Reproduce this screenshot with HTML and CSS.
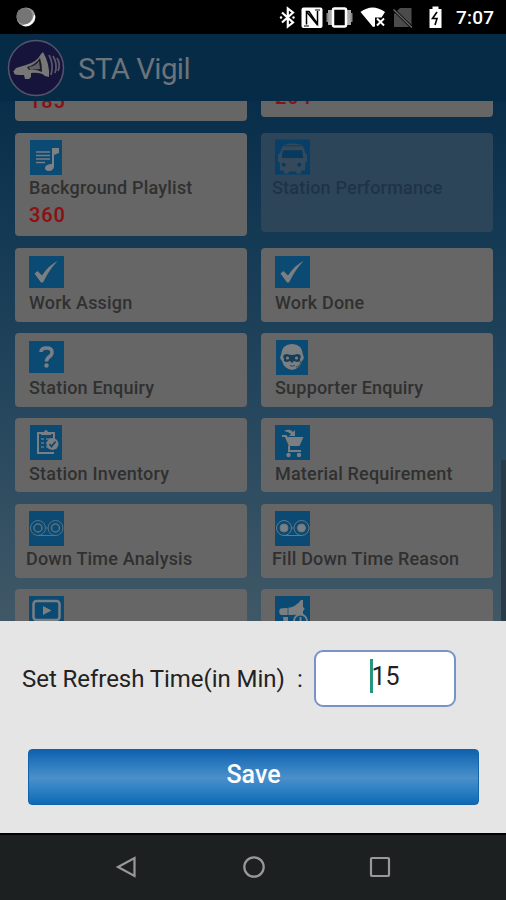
FILE: index.html
```html
<!DOCTYPE html>
<html lang="en">
<head>
<meta charset="utf-8">
<title>STA Vigil</title>
<link rel="stylesheet" href="styles.css">
</head>
<body>
<div class="screen">
  <div class="status">
    <svg class="sync" width="22" height="22" viewBox="0 0 22 22"><circle cx="11" cy="11" r="9.500" fill="#999"/><path d="M19.500 9a9 9 0 0 1-11 10.500q9-1 11-10.500" fill="#fff" stroke="#fff"/><circle cx="9.500" cy="10" r="8" fill="#757575"/></svg>
    <svg class="sysicons" width="170" height="34" viewBox="0 0 170 34" fill="none">
      <path d="M3 12.500 14 22.500 8.800 26.500V8.500L14 12.500 3 22.500" stroke="#fff" stroke-width="2.200"/><circle cx="2" cy="17.500" r="1.200" fill="#fff"/><circle cx="14.500" cy="17.500" r="1.200" fill="#fff"/>
      <rect x="22.500" y="7.500" width="21" height="20.500" rx="2" fill="#fff"/><path d="M27.500 24.500V11.500h2.500L38.500 24V11M27 11l11.500 14" stroke="#000" stroke-width="1.500"/><path d="M25 26h5M36 10h5" stroke="#000"/>
      <path d="M51 10v15M70 10v15" stroke="#aaa" stroke-width="4"/><path d="M48.500 13v9M72.500 13v9" stroke="#888" stroke-width="2"/><rect x="54" y="8.500" width="13" height="18" rx="1.500" stroke="#fff" stroke-width="2.500"/>
      <path d="M81.500 12Q93.500 3 106 12L102.500 17.500H96V26.500L94 27Z" fill="#fff"/><path d="m98 18.500 7 7m0-7-7 7" stroke="#fff" stroke-width="2"/>
      <path d="M121 8h11.500v19H115V14Z" fill="#4b4b4b"/><path d="m114.500 9.500 18.500 18" stroke="#000" stroke-width="3"/><path d="m114.500 9.500 18.500 18" stroke="#666" stroke-width="1.500"/>
      <path d="M150.500 9h3V6.500h6V9h3v19h-12Z" fill="#fff"/><path d="m158 12-4.500 6.500h4.500L156 25" stroke="#000" stroke-width="1.600"/>
    </svg>
    <span class="clock">7:07</span>
  </div>
  <header class="appbar">
    <svg class="logo" width="58" height="58" viewBox="0 0 58 58"><circle cx="29" cy="29" r="27.500" fill="#17143b" stroke="#55546c" stroke-width="1.500"/><path d="M6 33 9 29 19 26Q30 23 34 15l2-2q7 12 6 25l-4-1q-4-4-14-3v4l-2 2h-4l-1-4-5 0q-6 0-5-3Z" fill="#777"/><path d="M20 28q8-2 13-9 2 6 2 14-6-3-13-2" fill="#1b1b25"/><path d="M22 28q7-1 10-6l1 8-10 1" fill="#606068"/><path d="M42 16q5 9 2 20M46 17q5 8 2 17M50 19q4 6 1 13" fill="none" stroke="#5b5a6d" stroke-width="1.700"/></svg>
    <h1>STA Vigil</h1>
  </header>
  <main class="list">
    <div class="grid">
      <div class="card tall end"><b class="count">185</b></div>
      <div class="card mid end"><b class="count">204</b></div>

      <div class="card tall">
        <div class="slot"><svg width="32" height="35" viewBox="0 0 32 35"><rect width="32" height="35" fill="#0b4a72"/><path d="M6 12h14M6 15.500h14M6 19h14M6 22.500h9" stroke="#737d84" stroke-width="1.700"/><path d="M22 8h7v5l-5 2v12q-1 4-5 4-4 0-4-3 0-3 5-4h2Z" fill="#7b8185"/></svg></div>
        <div class="title">Background Playlist</div><b class="count">360</b>
      </div>
      <div class="card mid disabled">
        <div class="slot"><svg width="36" height="36" viewBox="0 0 36 36"><rect width="36" height="36" fill="#073f68"/><path d="M7 9Q8 4 18 4t12 5l1 5 2 2v7l-2 1v8h-4v3h-5v-2h-8v2H9v-3H5v-8l-2-1v-7l2-2Z" fill="#34495a"/><path d="M8 11h20l1 8H7Z" fill="#083a5f"/><path d="M10 6.500h16" stroke="#0b3d60"/><circle cx="9" cy="26" r="2" fill="#083a5f"/><circle cx="25" cy="26" r="2" fill="#083a5f"/></svg></div>
        <div class="title out">Station Performance</div>
      </div>

      <div class="card">
        <div class="slot"><svg width="35" height="32" viewBox="0 0 35 32"><rect width="35" height="32" fill="#0b4a72"/><path d="M5.500 17.500 8.500 15l4.500 4.500Q20 9 28.500 5 20 14 14 26.500h-2Z" fill="#7c7f82"/></svg></div>
        <div class="title">Work Assign</div>
      </div>
      <div class="card">
        <div class="slot"><svg width="35" height="32" viewBox="0 0 35 32"><rect width="35" height="32" fill="#0b4a72"/><path d="M5.500 17.500 8.500 15l4.500 4.500Q20 9 28.500 5 20 14 14 26.500h-2Z" fill="#7c7f82"/></svg></div>
        <div class="title">Work Done</div>
      </div>

      <div class="card">
        <div class="slot"><svg width="35" height="32" viewBox="0 0 35 32"><rect width="35" height="32" fill="#0b4a72"/><path d="M12 11Q12 7 17.500 7t5.500 4.200q0 2.800-3 4.800-2.500 1.800-2.500 4.500" fill="none" stroke="#7c7f82" stroke-width="3.500"/><circle cx="17.500" cy="24.500" r="2.200" fill="#7c7f82"/></svg></div>
        <div class="title">Station Enquiry</div>
      </div>
      <div class="card">
        <div class="slot"><svg width="32" height="35" viewBox="0 0 32 35"><rect width="32" height="35" fill="#0b4a72"/><path d="M16 4Q26 4 27 15q2 3-1 6-2 8-10 9-8-1-10-9-3-3-1-6Q6 4 16 4Z" fill="#7c7f82"/><path d="M7 16q1-2 4-2 5 2 10 0 3 0 4 2l-1 3q1 3-3 3l-3-1-2 2-2-2-3 1q-4 0-3-3Z" fill="#173f58"/><circle cx="11.500" cy="18" r="1.600" fill="#7c7f82"/><circle cx="20.500" cy="18" r="1.600" fill="#7c7f82"/><path d="M14 25.500q2.500 1.500 5 0M25 21q-1 6-5 6" fill="none" stroke="#234c63"/></svg></div>
        <div class="title">Supporter Enquiry</div>
      </div>

      <div class="card">
        <div class="slot"><svg width="32" height="35" viewBox="0 0 32 35" fill="none"><rect width="32" height="35" fill="#0b4a72"/><path d="M24 14V8H8v20h16" stroke="#7c7f82" stroke-width="2"/><path d="M11 10V7h3q2-4 4 0h3v3Z" fill="#7c7f82"/><path d="M11 14h3m2 0h5M11 18h3m2 0h2M11 22h3m2 0h2" stroke="#607889" stroke-width="1.500"/><circle cx="22.500" cy="19" r="6" fill="#7c7f82"/><path d="m19.500 19 2 2.500 4-5" stroke="#164864" stroke-width="1.800"/></svg></div>
        <div class="title">Station Inventory</div>
      </div>
      <div class="card">
        <div class="slot"><svg width="35" height="35" viewBox="0 0 35 35" fill="none"><rect width="35" height="35" fill="#0b4a72"/><path d="M7 11h4l4 10" stroke="#7c7f82" stroke-width="2"/><path d="M10 12h18.500l-4 9H14Z" fill="#7c7f82"/><path d="M9 6q6-3 9 1l2-2v6h-6l2-2q-2-2-7-3Z" fill="#7c7f82"/><path d="M14 21v5h12" stroke="#7c7f82" stroke-width="2"/><circle cx="13.500" cy="30" r="2.200" fill="#7c7f82"/><circle cx="24" cy="30" r="2.200" fill="#7c7f82"/></svg></div>
        <div class="title">Material Requirement</div>
      </div>

      <div class="card">
        <div class="slot"><svg width="35" height="35" viewBox="0 0 35 35" fill="none" stroke="#57717f"><rect width="35" height="35" fill="#0b4a72" stroke="none"/><circle cx="9" cy="17" r="7.500"/><circle cx="26.500" cy="17" r="7.500"/><circle cx="9" cy="17" r="4" stroke-width="1.500"/><circle cx="26.500" cy="17" r="4" stroke-width="1.500"/><path d="M9 24.500h18M16.500 17h2"/></svg></div>
        <div class="title out">Down Time Analysis</div>
      </div>
      <div class="card">
        <div class="slot"><svg width="35" height="35" viewBox="0 0 35 35" fill="none" stroke="#657984"><rect width="35" height="35" fill="#0b4a72" stroke="none"/><circle cx="9" cy="17" r="7.500"/><circle cx="26.500" cy="17" r="7.500"/><circle cx="9" cy="17" r="4" fill="#7c7f82"/><circle cx="26.500" cy="17" r="4" fill="#7c7f82"/><path d="M9 24.500h18M16.500 17h2"/></svg></div>
        <div class="title out">Fill Down Time Reason</div>
      </div>

      <div class="card">
        <div class="slot"><svg width="35" height="35" viewBox="0 0 35 35"><rect width="35" height="35" fill="#0b4a72"/><rect x="4.500" y="5" width="26" height="19" rx="3" fill="none" stroke="#7c7f82" stroke-width="2.500"/><path d="m14 10 8.500 4.500-8.500 4.500Z" fill="#7c7f82"/></svg></div>
      </div>
      <div class="card">
        <div class="slot"><svg width="35" height="35" viewBox="0 0 35 35"><rect width="35" height="35" fill="#0b4a72"/><path d="M5 13q1-1 7-1 9-1 14-8h2v7q3 2 0 4v5q-6-2-11-1H6q-3-2-1-6ZM8 21h5v9H9Z" fill="#7c7f82"/><path d="M13 12v7" stroke="#33576c"/><circle cx="25.500" cy="25" r="6.500" fill="#0b4a72" stroke="#7c7f82" stroke-width="2"/><path d="M25.500 21v6" stroke="#7c7f82" stroke-width="2"/></svg></div>
      </div>
    </div>
    <i class="scrollbar"></i>
  </main>
  <section class="sheet">
    <div class="field">
      <label>Set Refresh Time(in Min)</label><span class="colon">:</span>
      <div class="input"><i class="caret"></i><span>15</span></div>
    </div>
    <div class="save">Save</div>
  </section>
  <nav class="nav">
    <svg width="24" height="24" viewBox="0 0 24 24"><path d="M19.500 3v18L3 12Z"/></svg>
    <svg width="24" height="24" viewBox="0 0 24 24"><circle cx="12" cy="12" r="9.700"/></svg>
    <svg width="24" height="24" viewBox="0 0 24 24"><rect x="3" y="3" width="18" height="18" rx="1"/></svg>
  </nav>
</div>
</body>
</html>
```

FILE: styles.css
```css
* { box-sizing: border-box; }
body { margin: 0; font-family: Roboto, "Liberation Sans", sans-serif; }
svg { display: block; }
.screen {
  width: 506px; height: 900px; overflow: hidden;
  display: flex; flex-direction: column; background: #000;
}
.status { height: 34px; flex: none; display: flex; align-items: center; color: #fff; }
.sync { margin-left: 15px; }
.sysicons { margin-left: 242px; }
.clock { margin-left: 7px; font-size: 19px; font-weight: 500; letter-spacing: 0.2px; padding-top: 1px; }
.appbar {
  height: 67px; flex: none; display: flex; align-items: center;
  padding-left: 7px; background: #062b47;
}
.appbar h1 {
  margin: 3px 0 0 13px; font-size: 29.500px; line-height: 36px;
  font-weight: 400; color: #6c7379; letter-spacing: -0.6px;
}
.list {
  height: 520px; flex: none; overflow: hidden; position: relative;
  background: linear-gradient(#082e4b, #153a54 27%, #26475e 60%, #405866);
}
.grid {
  display: grid; grid-template-columns: 232px 232px;
  column-gap: 14px; row-gap: 11.4px; align-items: start;
  padding-left: 14.500px; margin-top: -83.200px;
}
.card { height: 74px; border-radius: 4px; background: #666; padding: 6.500px 0 0 14px; }
.card.tall { height: 103.500px; }
.card.mid { height: 99.500px; }
.card.end { display: flex; flex-direction: column; justify-content: flex-end; padding-bottom: 8px; }
.card.disabled { background: #2d4558; }
.slot { width: 35px; height: 36px; display: flex; align-items: center; justify-content: center; }
.title {
  margin-top: 2px; padding-left: 0.500px; font-size: 18px; line-height: 22px;
  font-weight: 500; color: #303030; white-space: nowrap; letter-spacing: 0.2px;
}
.title.out { margin-left: -3px; }
.disabled .title { color: #1d3447; }
.count { display: block; margin: 4px 0 0 0.500px; font-size: 20px; line-height: 24px; font-weight: 600; color: #8c1115; letter-spacing: 0.8px; }
.scrollbar { position: absolute; right: 0; top: 359px; width: 5px; height: 161px; background: #293b46; }
.sheet { height: 212px; flex: none; background: #e5e5e5; padding-top: 29px; }
.field { display: flex; align-items: center; height: 57px; padding-left: 22px; font-size: 24px; color: #222; }
.field label { width: 275px; white-space: nowrap; letter-spacing: -0.050px; padding-top: 1px; }
.colon { width: 17px; }
.input {
  width: 142px; height: 57px; border: 2px solid #7893c8; border-radius: 9px;
  background: #fff; display: flex; justify-content: center; padding-top: 7px;
  font-size: 25px; line-height: 36px;
}
.caret { width: 3px; height: 34px; background: #26967c; margin-right: -2px; }
.save {
  margin: 42px 0 0 28px; width: 451px; height: 56px; border-radius: 4px;
  border: 1px solid #1263aa;
  background: linear-gradient(#0f61ae, #2a79bf 25%, #4a90ca 52%, #2c7fc3 75%, #0e69b3);
  color: #fff; font-size: 25px; font-weight: 500; line-height: 50px; text-align: center;
}
.nav {
  height: 65px; flex: none; margin-top: 2px; background: #1c2020;
  display: flex; justify-content: center; gap: 102.500px; padding: 20px 0 0 1px;
}
.nav svg { fill: none; stroke: #999; stroke-width: 2.200; }
```
